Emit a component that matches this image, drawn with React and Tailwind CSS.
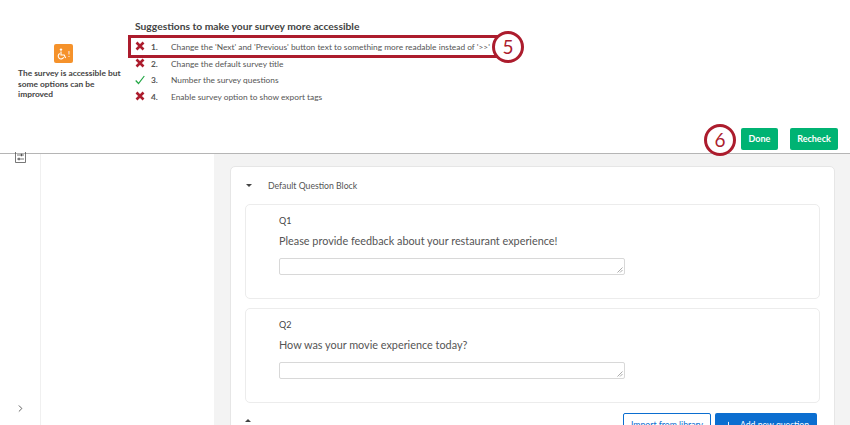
import React from "react";
import { ChevronRight, Plus } from "lucide-react";

const suggestions = [
  { ok: false, text: "Change the 'Next' and 'Previous' button text to something more readable instead of '>>'" },
  { ok: false, text: "Change the default survey title" },
  { ok: true, text: "Number the survey questions" },
  { ok: false, text: "Enable survey option to show export tags" },
];

function Cross() {
  return (
    <svg width="10" height="10" viewBox="0 0 10 10">
      <path d="M1.5 1.5L8.5 8.5M8.5 1.5L1.5 8.5" stroke="#ac1c2d" strokeWidth="2.6" fill="none" />
    </svg>
  );
}

function Check() {
  return (
    <svg width="10" height="10" viewBox="0 0 10 10">
      <path d="M0.7 5.5L3.5 8.5L9.3 1" stroke="#22a745" strokeWidth="1.2" fill="none" />
    </svg>
  );
}

function Callout({ n, className }) {
  return (
    <div
      className={`absolute w-[32px] h-[32px] rounded-full border-[3px] border-[#ac1c2d] bg-white flex items-center justify-center text-[#ac1c2d] text-[19px] ${className}`}
    >
      {n}
    </div>
  );
}

function Question({ label, text }) {
  return (
    <div className="h-[95px] border border-[#ececec] rounded-[5px] pl-[33px] pt-[10px]">
      <div className="text-[9px] leading-[12px] text-[#444]">{label}</div>
      <div className="mt-[6px] text-[10.85px] leading-[16px] text-[#555]">{text}</div>
      <div className="mt-[9px] w-[346px] h-[17px] border border-[#d8d8d8] rounded-[2px] bg-white relative">
        <svg className="absolute right-[1px] bottom-[1px]" width="6" height="6" viewBox="0 0 6 6">
          <path d="M0.5 5.5L5.5 0.5M3 5.5L5.5 3" stroke="#888" strokeWidth="0.7" fill="none" />
        </svg>
      </div>
    </div>
  );
}

export default function App() {
  return (
    <div className="relative w-[850px] h-[425px] overflow-hidden bg-white font-['Lato',sans-serif]">
      <div className="h-[154px] border-b border-[#b5b5b5] flex relative">
        <div className="w-[128px] pl-[18px] pt-[44px]">
          <div className="ml-[36px] w-[19px] h-[19px] rounded-[2px] bg-[#f5922b] flex items-center justify-center gap-[1px]">
            <svg width="10" height="12" viewBox="0 0 10 12">
              <circle cx="4" cy="1.6" r="1.2" fill="#fff" />
              <path d="M4 3.5V7H7.2L8.6 10M2.8 5.6A2.8 2.8 0 1 0 6.6 9.2" stroke="#fff" strokeWidth="1.1" fill="none" />
            </svg>
            <span className="text-[8px] leading-[10px] font-bold text-white/80">!</span>
          </div>
          <div className="mt-[5px] text-[8.4px] leading-[10.7px] font-bold text-[#444] w-[108px]">
            The survey is accessible but some options can be improved
          </div>
        </div>
        <div className="pt-[19px] pl-[7px]">
          <div className="text-[10.3px] leading-[14px] font-bold text-[#444]">
            Suggestions to make your survey more accessible
          </div>
          <div className="mt-[6px]">
            {suggestions.map((s, i) => (
              <div key={i} className="h-[16.7px] flex items-center text-[8.35px] text-[#555] whitespace-nowrap">
                <div className="w-[16px] -mt-[2px] flex">{s.ok ? <Check /> : <Cross />}</div>
                <div className="w-[20px] font-bold">{i + 1}.</div>
                <div>{s.text}</div>
              </div>
            ))}
          </div>
        </div>
        <div className="absolute right-[12px] top-[128px] flex gap-[12px]">
          <button className="w-[37px] h-[22px] rounded-[2px] bg-[#00b373] text-white text-[9px] font-bold">Done</button>
          <button className="w-[48px] h-[22px] rounded-[2px] bg-[#00b373] text-white text-[9px] font-bold">Recheck</button>
        </div>
      </div>

      <div className="flex h-[271px]">
        <div className="w-[41px] border-r border-[#f0f0f0] relative">
          <svg className="absolute left-[15px] top-[-2px]" width="11" height="11" viewBox="0 0 11 11" fill="none" stroke="#555" strokeWidth="0.8">
            <path d="M0.5 0V10.5H10.5V0" />
            <path d="M2 3H9M2 7H9" />
            <path d="M6.5 1.8V4.2M4 5.8V8.2" strokeWidth="1.3" />
          </svg>
          <ChevronRight size={11} strokeWidth={2} className="absolute left-[15px] top-[249px] text-[#555]" />
        </div>
        <div className="w-[173px]"></div>
        <div className="flex-1 bg-[#f3f3f3] pl-[16px] pr-[15px] pt-[12px]">
          <div className="h-[300px] bg-white border border-[#e6e6e6] rounded-[5px] px-[14px]">
            <div className="h-[37px] flex items-center text-[8.7px] text-[#555]">
              <div className="w-[23px] pl-[1px]">
                <div className="w-0 h-0 border-x-[3px] border-x-transparent border-t-[3px] border-t-[#444]"></div>
              </div>
              Default Question Block
            </div>
            <div className="flex flex-col gap-[9px]">
              <Question label="Q1" text="Please provide feedback about your restaurant experience!" />
              <Question label="Q2" text="How was your movie experience today?" />
            </div>
            <div className="mt-[10px] flex justify-end gap-[4px] pr-[3px] relative">
              <div className="absolute left-0 top-[6px] w-0 h-0 border-x-[3px] border-x-transparent border-b-[3px] border-b-[#444]"></div>
              <button className="w-[88px] h-[24px] border border-[#0b6ed0] rounded-[2px] bg-white text-[#0b6ed0] text-[8.7px] leading-[22px]">Import from library</button>
              <button className="w-[102px] h-[24px] rounded-[2px] bg-[#0b6ed0] text-white text-[8.7px] flex items-center justify-center gap-[6px]">
                <Plus size={11} />Add new question
              </button>
            </div>
          </div>
        </div>
      </div>

      <div className="absolute left-[128px] top-[35px] w-[370px] h-[23px] border-[3px] border-[#ac1c2d]"></div>
      <Callout n="5" className="left-[492px] top-[31px]" />
      <Callout n="6" className="left-[704px] top-[124px]" />
    </div>
  );
}
